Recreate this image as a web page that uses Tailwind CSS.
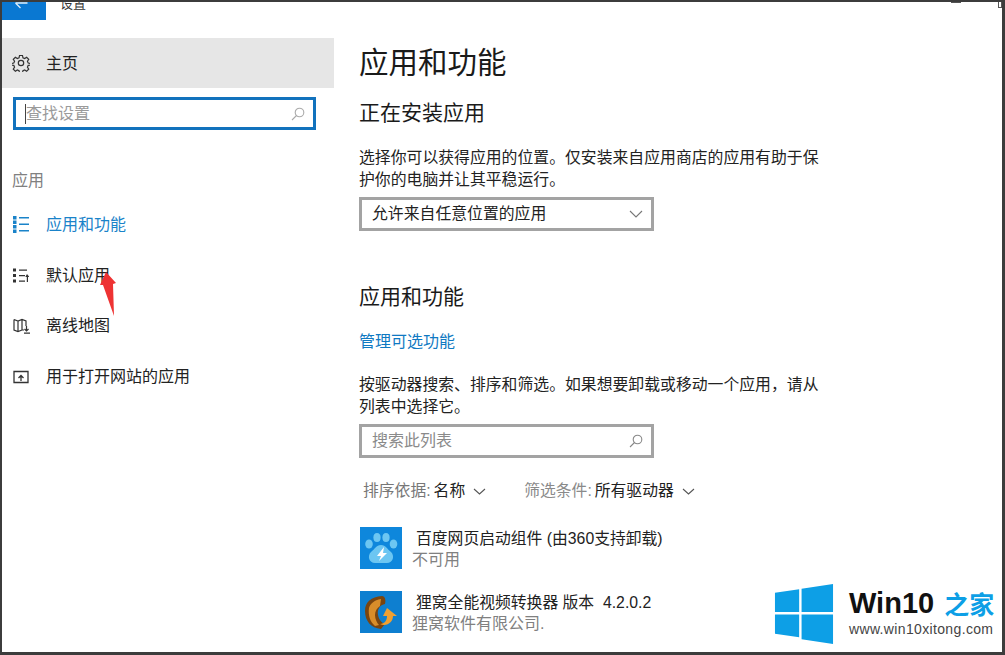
<!DOCTYPE html>
<html lang="zh-CN">
<head>
  <meta charset="UTF-8" />
  <title>设置 - 应用和功能</title>
  <script src="https://cdn.jsdelivr.net/npm/@tailwindcss/browser@4"></script>
</head>
<body class="bg-white text-[#222] font-['Liberation_Sans','Noto_Sans_CJK_SC',sans-serif]">
<div class="relative w-[1005px] h-[655px] overflow-hidden border-t-2 border-l-2 border-r-3 border-b-3 border-[#3c3c3c] flex bg-white">

  <!-- sidebar -->
  <aside class="w-[332px] shrink-0 flex flex-col">
    <div class="h-[18px] flex">
      <div class="w-[44px] bg-[#0a78d2]">
        <svg class="ml-[12px]" width="16" height="8" viewBox="0 0 16 8" fill="none" stroke="#dfeefa" stroke-width="1.300"><path d="M1.500 1h12M1.500 1l5 5"/></svg>
      </div>
      <span class="ml-[14px] -mt-[8px] text-[13px] leading-[20px] text-[#333]">设置</span>
    </div>
    <div class="mt-[18px] h-[50px] bg-[#e6e6e6] flex items-center pl-[10px]">
      <svg width="18" height="18" viewBox="0 0 24 24" fill="none" stroke="#333" stroke-width="1.600"><circle cx="12" cy="12" r="3.600"/><path d="M10 2h4l.6 3 2.300 1 2.600-1.700 2.800 2.800-1.700 2.600 1 2.300 3 .6v2l-3 .6-1 2.300 1.700 2.600-2.800 2.800-2.600-1.700-2.300 1-.6 3h-4l-.6-3-2.300-1-2.600 1.700-2.800-2.800 1.700-2.600-1-2.300-3-.6v-2l3-.6 1-2.300-1.700-2.600 2.800-2.800 2.600 1.700 2.300-1z"/></svg>
      <span class="ml-[16px] text-[16px] leading-[26px] mt-[1px]">主页</span>
    </div>
    <div class="mt-[9px] ml-[11px] w-[303px] h-[33px] border-3 border-[#1272bd] flex items-center justify-between pl-[9px] pr-[8px]">
      <span class="border-l border-[#444] text-[16px] leading-[20px] text-[#9a9a9a]">查找设置</span>
      <svg width="14" height="14" viewBox="0 0 14 14" fill="none" stroke="#aaa" stroke-width="1.100"><circle cx="8.500" cy="5.500" r="4.300"/><path d="M5.500 8.500L1 13"/></svg>
    </div>
    <div class="mt-[40px] ml-[10px] text-[16px] leading-[22px] text-[#808080]">应用</div>

    <nav class="mt-[7px] flex flex-col text-[16px]">
      <div class="h-[51px] flex items-center pl-[11px] text-[#1a83c9]">
        <svg class="w-[16px] h-[17px]" viewBox="0 0 16 17" fill="#1a83c9"><path d="M0 0h3.500v3.500H0zM0 4.500h3.500V8H0zM0 9h3.500v3.500H0zM0 13.500h3.500V17H0zM6 1h10v1.500H6zM6 7.500h10V9H6zM6 14h10v1.500H6z"/></svg>
        <span class="ml-[17px]">应用和功能</span>
      </div>
      <div class="h-[51px] flex items-center pl-[11px]">
        <svg class="w-[16px] h-[15px]" viewBox="0 0 16 15" fill="#333"><path d="M0 .5h3v3H0zM0 6h3v3H0zM0 11.500h3v3H0zM6 1.500h8v1.300H6zM6 7h6v1.300H6zM6 12.500h6v1.300H6zM14 6l2.500 3H15v5h-1.200V9h-1.500z"/></svg>
        <span class="ml-[17px]">默认应用</span>
      </div>
      <div class="h-[50px] flex items-center pl-[11px]">
        <svg class="w-[18px] h-[16px]" viewBox="0 0 18 16" fill="none" stroke="#333" stroke-width="1.200"><path d="M1 1.500l4 1.500 4-1.500 4 1.500v5M1 1.500V12l4 1.500L9 12h2M5 3v10.500M9 1.500V12M13.500 8v5M11.500 11l2 2 2-2M11 15.200h6"/></svg>
        <span class="ml-[15px]">离线地图</span>
      </div>
      <div class="h-[51px] flex items-center pl-[11px]">
        <svg class="w-[16px] h-[14px]" viewBox="0 0 16 14" fill="none" stroke="#333" stroke-width="1.300"><path d="M1 1.500h14v11H1zM8 11V5.500M5.500 8L8 5.500 10.500 8"/></svg>
        <span class="ml-[17px]">用于打开网站的应用</span>
      </div>
    </nav>
  </aside>

  <!-- main -->
  <main class="pl-[25px] flex-1 min-w-0">
    <h1 class="mt-[38px] text-[29.500px] leading-[46px] font-normal text-[#1a1a1a]">应用和功能</h1>
    <h2 class="mt-[11px] text-[21px] leading-[32px] text-[#1a1a1a]">正在安装应用</h2>
    <p class="mt-[18px] w-[470px] text-[15.850px] leading-[22px] text-[#222]">选择你可以获得应用的位置。仅安装来自应用商店的应用有助于保护你的电脑并让其平稳运行。</p>
    <div class="mt-[6px] w-[295px] h-[34px] border-3 border-[#a3a3a3] flex items-center justify-between pl-[10px] pr-[8px] text-[15.850px]">
      <span>允许来自任意位置的应用</span>
      <svg width="14" height="8" viewBox="0 0 14 8" fill="none" stroke="#777" stroke-width="1.100"><path d="M1 1l6 6 6-6"/></svg>
    </div>
    <h2 class="mt-[50px] text-[21px] leading-[32px] text-[#1a1a1a]">应用和功能</h2>
    <a class="block mt-[17px] text-[16px] leading-[24px] text-[#0f79c2]">管理可选功能</a>
    <p class="mt-[20px] w-[470px] text-[15.850px] leading-[22px] text-[#222]">按驱动器搜索、排序和筛选。如果想要卸载或移动一个应用，请从列表中选择它。</p>
    <div class="mt-[6px] w-[295px] h-[34px] border-3 border-[#a3a3a3] flex items-center justify-between pl-[10px] pr-[8px] text-[16px] text-[#8a8a8a]">
      <span>搜索此列表</span>
      <svg width="14" height="14" viewBox="0 0 14 14" fill="none" stroke="#888" stroke-width="1.100"><circle cx="8.500" cy="5.500" r="4.300"/><path d="M5.500 8.500L1 13"/></svg>
    </div>
    <div class="mt-[22px] ml-[4px] flex items-center text-[15.800px] leading-[22px]">
      <span class="text-[#777]">排序依据:</span>
      <span class="ml-[3px] text-[#222]">名称</span>
      <svg class="ml-[8px]" width="13" height="7" viewBox="0 0 13 7" fill="none" stroke="#555" stroke-width="1.100"><path d="M1 1l5.500 5L12 1"/></svg>
      <span class="ml-[38px] text-[#8a8a8a]">筛选条件:</span>
      <span class="ml-[3px] text-[#222]">所有驱动器</span>
      <svg class="ml-[8px]" width="13" height="7" viewBox="0 0 13 7" fill="none" stroke="#555" stroke-width="1.100"><path d="M1 1l5.500 5L12 1"/></svg>
    </div>

    <div class="mt-[25px] flex flex-col gap-[22px]">
      <div class="flex h-[42px] pl-[1px]">
        <svg class="shrink-0" width="42" height="42" viewBox="0 0 42 42">
          <rect width="42" height="42" fill="#0e87dc"/>
          <g fill="#6cc6f2">
            <ellipse cx="9" cy="17" rx="3.800" ry="4.500"/><ellipse cx="17" cy="10.500" rx="3.600" ry="4.500"/>
            <ellipse cx="26" cy="10.500" rx="3.600" ry="4.500"/><ellipse cx="33.500" cy="17" rx="3.800" ry="4.500"/>
            <path d="M21 18c5 0 6 4 10 7 4 4 2 11-4 11H15c-6 0-8-7-4-11 4-3 5-7 10-7z"/>
          </g>
          <path d="M24 20l-7 9h4l-2 5 8-8h-4z" fill="#fff"/>
        </svg>
        <div class="ml-[10px] mt-[1px]">
          <div class="ml-[4px] text-[15.800px] leading-[21px] text-[#222]">百度网页启动组件 (由360支持卸载)</div>
          <div class="text-[16px] leading-[21px] text-[#808080]">不可用</div>
        </div>
      </div>
      <div class="flex h-[42px] pl-[1px]">
        <svg class="shrink-0" width="42" height="42" viewBox="0 0 42 42">
          <rect width="42" height="42" fill="#0e7fd0"/>
          <path d="M5 20C5 11 11 6 22 5c3 0 4 4 3 8-5 1-8 5-7 11 1 5 4 8 7 9l-4 5C11 37 5 30 5 20z" fill="#7a4510"/>
          <path d="M9 17c1-4 5-8 12-9l-1 7c-3 2-5 5-5 9 0 4 2 8 4 10l-4 1c-5-4-7-11-6-18z" fill="#d88d2a"/>
          <path d="M27 17l10 8h-4c0 6-6 11-13 8 5 0 7-4 7-8h-4z" fill="#f0a032"/>
        </svg>
        <div class="ml-[10px] mt-[1px]">
          <div class="ml-[4px] text-[15.800px] leading-[21px] text-[#222]">狸窝全能视频转换器 版本&nbsp; 4.2.0.2</div>
          <div class="text-[16px] leading-[21px] text-[#808080]">狸窝软件有限公司.</div>
        </div>
      </div>
    </div>
  </main>

  <!-- annotation arrow -->
  <svg class="absolute left-[98px] top-[270px]" width="18" height="46" viewBox="0 0 18 46"><path d="M6 0L16 11l-3 1 1 32-11-31-3 0z" fill="#ee3333"/></svg>

  <!-- window controls, cut off at the top -->
  <div class="absolute left-[949px] top-[0px] w-[10px] h-[1px] bg-[#555]"></div>
  <div class="absolute left-[996px] top-[0px] w-[4px] h-[6px] border border-t-0 border-[#555]"></div>

  <!-- watermark -->
  <div class="absolute left-[768px] top-[574px] w-[232px] h-[76px] bg-white flex items-center">
    <svg class="ml-[4px] shrink-0" width="60" height="60" viewBox="0 0 60 62" fill="#0d9fe6"><path d="M0 9l25-3.500V29H0zM27.500 5L60 0v29H27.500zM0 31.500h25V55L0 51.500zM27.500 31.500H60V62l-32.500-5z"/></svg>
    <div class="ml-[15px] -mt-[5px] flex flex-col">
      <div class="flex items-center leading-[32px]">
        <span class="text-[29px] font-bold text-[#111]">Win10</span>
        <span class="ml-[10px] text-[25px] font-bold text-[#0d9fe6] font-['Noto_Sans_CJK_SC',sans-serif]">之家</span>
      </div>
      <div class="mt-[2px] text-[14px] leading-[16px] tracking-[0.35px] text-[#444]">www.win10xitong.com</div>
    </div>
  </div>
</div>
</body>
</html>
